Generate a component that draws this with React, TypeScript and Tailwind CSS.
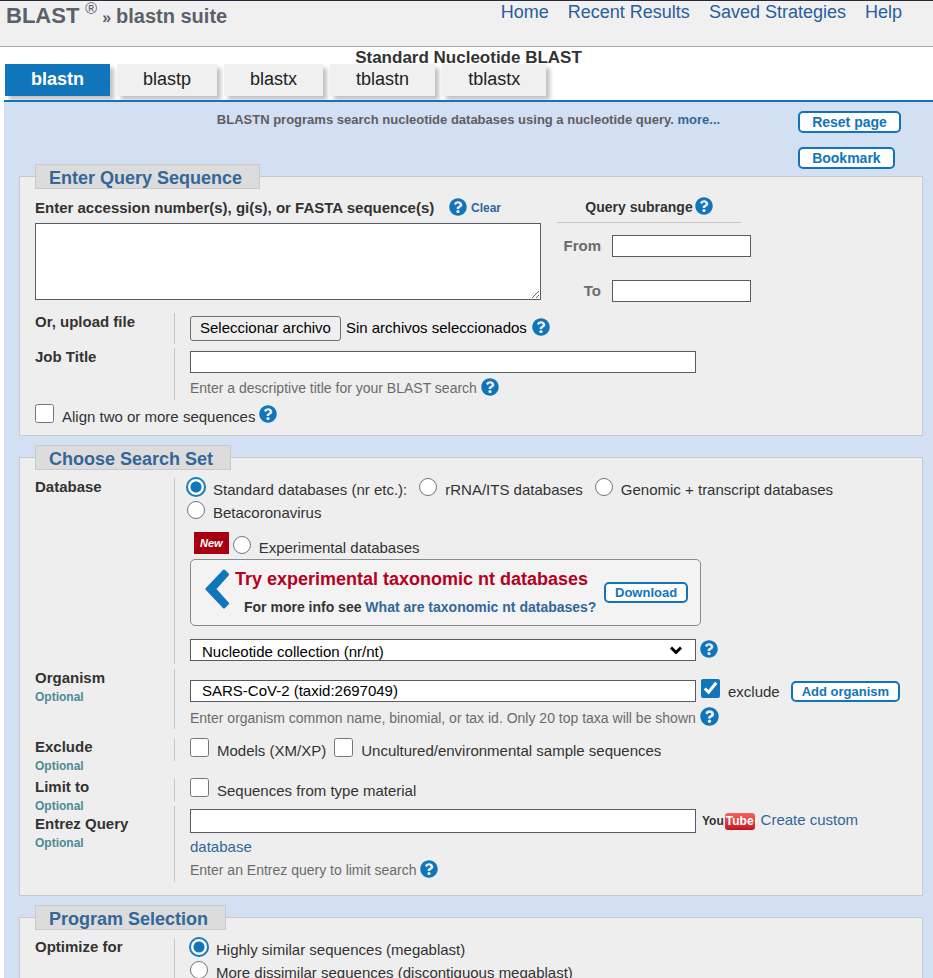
import type { ReactNode } from "react";
import { FaQuestionCircle } from "react-icons/fa";

function HelpButton({ topic, large = false }: { topic: string; large?: boolean }) {
  return (
    <button type="button" aria-label={`Help: ${topic}`} className="-mt-[3px] shrink-0 text-[#1175bb]">
      <FaQuestionCircle className={large ? "size-[19px]" : "size-[18px]"} />
    </button>
  );
}

function OutlineButton({ children, small = false }: { children: ReactNode; small?: boolean }) {
  return (
    <button
      type="button"
      className={`${
        small ? "h-[21px] px-[9px] text-[13px]" : "h-[22px] px-3 pb-px text-[14px]"
      } flex items-center rounded-[5px] border-2 border-[#1175bb] bg-white leading-none font-bold whitespace-nowrap text-[#1175bb]`}
    >
      {children}
    </button>
  );
}

function Panel({ title, className = "", children }: { title: string; className?: string; children: ReactNode }) {
  return (
    <fieldset className={`mr-[10px] ml-[15px] border border-[#c9c9c9] bg-[#eeeeee] px-[15px] ${className}`}>
      <legend className="h-[25px] border border-[#cacaca] bg-[#dcdcdc] pr-[17px] pl-[13px] text-[18px] leading-[27px] font-bold text-[#336699]">
        {title}
      </legend>
      {children}
    </fieldset>
  );
}

type RowProps = {
  label: string;
  htmlFor?: string;
  optional?: boolean;
  className?: string;
  labelClass?: string;
  contentClass?: string;
  children: ReactNode;
};

function Row({ label, htmlFor, optional, className = "", labelClass = "", contentClass = "", children }: RowProps) {
  return (
    <div className={`flex items-start ${className}`}>
      <div className={`w-[139px] shrink-0 ${labelClass}`}>
        <label htmlFor={htmlFor} className="block leading-[18px] font-bold">
          {label}
        </label>
        {optional && <span className="block text-[12px] leading-5 font-bold text-[#4f8a94]">Optional</span>}
      </div>
      <div className={`min-w-0 flex-1 border-l border-[#c6c6c6] pl-[15px] ${contentClass}`}>{children}</div>
    </div>
  );
}

function Check({ children, defaultChecked }: { children: ReactNode; defaultChecked?: boolean }) {
  return (
    <label className="flex items-start gap-2">
      <input type="checkbox" defaultChecked={defaultChecked} className="size-[19px] shrink-0 accent-[#1175bb]" />
      <span className="pt-1 leading-[18px] whitespace-nowrap">{children}</span>
    </label>
  );
}

function Radio({ name, children, defaultChecked }: { name: string; children: ReactNode; defaultChecked?: boolean }) {
  return (
    <label className="flex h-[23px] items-start gap-2">
      <input
        type="radio"
        name={name}
        defaultChecked={defaultChecked}
        className="size-[18px] shrink-0 appearance-none rounded-full border border-[#767676] bg-white checked:border-[#1175bb] checked:bg-[radial-gradient(circle,#1175bb_5px,#ffffff_6px)] checked:ring-1 checked:ring-[#1175bb]"
      />
      <span className="pt-[3px] leading-[18px] whitespace-nowrap">{children}</span>
    </label>
  );
}

const field = "block border border-[#565b66] bg-white text-black";
const hint = "flex h-5 items-center gap-1 text-[14px] text-[#6b6b6b]";
const link = "text-[#336699]";

const tabs = ["blastn", "blastp", "blastx", "tblastn", "tblastx"];
const menu = ["Home", "Recent Results", "Saved Strategies", "Help"];

export default function App() {
  return (
    <div className="flex h-screen flex-col overflow-hidden bg-white font-['Liberation_Sans',Arial,sans-serif] text-[15px] text-[#333333]">
      <header className="flex h-[47px] shrink-0 justify-between border-t border-b border-t-[#2b2a3a] border-b-[#aaaaaf] bg-[#f0f0f0] pr-[31px] pl-[6px]">
        <h1 className="flex items-start font-bold text-[#5b616b]">
          <a href="#blast" className="text-[22px] leading-[29px]">
            BLAST
          </a>
          <span className="ml-[6px] text-[16px] leading-4 font-normal">®</span>
          <span className="ml-[5px] text-[16px] leading-[33px]">»</span>
          <span className="ml-[5px] text-[20px] leading-[30px]">blastn suite</span>
        </h1>
        <nav className="flex gap-[19px] text-[18px] leading-[22px]">
          {menu.map((m) => (
            <a key={m} href="#menu" className="text-[#2a5d9c]">
              {m}
            </a>
          ))}
        </nav>
      </header>

      <h2 className="ml-1 h-[17px] shrink-0 text-center text-[17px] leading-[22px] font-bold">
        Standard Nucleotide BLAST
      </h2>

      <nav className="ml-[5px] flex h-9 shrink-0 items-start gap-[7px]">
        {tabs.map((t) => (
          <a
            key={t}
            href={`#${t}`}
            className={`h-8 px-[26px] text-[18px] leading-[30px] shadow-[4px_4px_4px_#c4c4c4] ${
              t === "blastn" ? "bg-[#1175bb] font-bold text-white" : "bg-[#f0f0f0] text-[#212121]"
            }`}
          >
            {t}
          </a>
        ))}
      </nav>

      <main className="relative ml-1 min-h-0 flex-1 border-t-2 border-[#1175bb] bg-[#d3dff3]">
        <div className="grid h-[62px] grid-cols-[1fr_auto_1fr]">
          <span />
          <p className="pt-2 text-[13px] leading-5 font-bold text-[#5e5e5e]">
            BLASTN programs search nucleotide databases using a nucleotide query.{" "}
            <a href="#more" className={link}>
              more...
            </a>
          </p>
          <div className="ml-[78px] flex flex-col items-start gap-[14px] pt-[9px]">
            <OutlineButton>Reset page</OutlineButton>
            <OutlineButton>Bookmark</OutlineButton>
          </div>
        </div>

        <Panel title="Enter Query Sequence" className="pb-[9px]">
          <div className="flex gap-4">
            <div>
              <div className="flex h-[34px] items-center gap-1 pt-1">
                <label htmlFor="seq" className="w-[410px] font-bold whitespace-nowrap">
                  Enter accession number(s), gi(s), or FASTA sequence(s)
                </label>
                <HelpButton topic="query sequence" />
                <a href="#clear" className={`text-[12px] font-bold ${link}`}>
                  Clear
                </a>
              </div>
              <textarea id="seq" className={`${field} h-[77px] w-[506px]`} />
            </div>
            <div>
              <div className="flex h-[34px] w-[184px] items-center justify-center gap-[2px] border-b border-[#c6c6c6] pt-1 text-[14px] font-bold">
                Query subrange
                <HelpButton topic="query subrange" />
              </div>
              <div className="flex flex-col gap-[23px] pt-3">
                <label className="flex h-[22px] items-center gap-[11px] font-bold text-[#6b6b6b]">
                  <span className="w-[44px] text-right">From</span>
                  <input type="text" className={`${field} h-[22px] w-[139px] font-normal`} />
                </label>
                <label className="flex h-[22px] items-center gap-[11px] font-bold text-[#6b6b6b]">
                  <span className="w-[44px] text-right">To</span>
                  <input type="text" className={`${field} h-[22px] w-[139px] font-normal`} />
                </label>
              </div>
            </div>
          </div>

          <Row
            label="Or, upload file"
            htmlFor="upload"
            className="mt-[11px]"
            contentClass="flex h-[31px] items-center gap-[5px]"
          >
            <input id="upload" type="file" className="sr-only" />
            <label
              htmlFor="upload"
              className="flex h-[25px] items-center rounded-[3px] border border-[#6f6f6f] bg-[#efefef] px-[9px] text-black"
            >
              Seleccionar archivo
            </label>
            <span className="text-black">Sin archivos seleccionados</span>
            <HelpButton topic="upload file" />
          </Row>

          <Row label="Job Title" htmlFor="job" className="mt-1" contentClass="pt-[3px] pb-[2px]">
            <input id="job" type="text" className={`${field} h-[22px] w-[506px] px-[11px]`} />
            <div className={`${hint} mt-[5px]`}>
              Enter a descriptive title for your BLAST search
              <HelpButton topic="job title" />
            </div>
          </Row>

          <div className="mt-1 flex items-center gap-1">
            <Check>Align two or more sequences</Check>
            <HelpButton topic="align sequences" />
          </div>
        </Panel>

        <Panel title="Choose Search Set" className="mt-[9px] pb-[13px]">
          <Row label="Database" htmlFor="db" className="mt-2" contentClass="pb-[3px]">
            <div className="-ml-[3px]">
              <div className="flex flex-wrap gap-x-3">
                <Radio name="db" defaultChecked>
                  Standard databases (nr etc.):
                </Radio>
                <Radio name="db">rRNA/ITS databases</Radio>
                <Radio name="db">Genomic + transcript databases</Radio>
                <Radio name="db">Betacoronavirus</Radio>
              </div>
              <div className="mt-2 flex items-start gap-1 pl-[7px]">
                <span className="h-[22px] bg-[#a60012] px-[6px] text-[11px] leading-[22px] font-bold text-white italic">
                  New
                </span>
                <div className="pt-1">
                  <Radio name="db">Experimental databases</Radio>
                </div>
              </div>
            </div>
            <div className="flex h-[67px] w-[511px] items-center rounded-[5px] border border-[#8a8a8a] bg-[#f3f3f3] pl-[14px]">
              <svg viewBox="0 0 24 40" className="-mt-2 h-10 w-6 shrink-0" aria-hidden="true">
                <path
                  d="M19 2 22.500 5.500 9.500 20 22.500 34.500 19 38 2 20Z"
                  fill="#1175bb"
                  stroke="#1175bb"
                  strokeWidth="3"
                  strokeLinejoin="round"
                />
              </svg>
              <div className="ml-[6px] w-[362px] pt-px font-bold">
                <p className="text-[18px] leading-[28px] whitespace-nowrap text-[#b5001f]">
                  Try experimental taxonomic nt databases
                </p>
                <p className="pl-[9px] text-[14px] leading-[28px] whitespace-nowrap">
                  For more info see{" "}
                  <a href="#taxonomic" className={link}>
                    What are taxonomic nt databases?
                  </a>
                </p>
              </div>
              <div className="ml-[7px]">
                <OutlineButton small>Download</OutlineButton>
              </div>
            </div>
            <div className="mt-[13px] flex items-center gap-1">
              <div className="relative">
                <select id="db" className={`${field} h-[22px] w-[506px] appearance-none px-[11px] pt-[2px] leading-5`}>
                  <option>Nucleotide collection (nr/nt)</option>
                </select>
                <svg
                  viewBox="0 0 12 8"
                  className="pointer-events-none absolute top-[7px] right-[14px] h-2 w-3"
                  aria-hidden="true"
                >
                  <path d="M1 1.500 6 6.500 11 1.500" fill="none" stroke="#000" strokeWidth="3" />
                </svg>
              </div>
              <HelpButton topic="database" />
            </div>
          </Row>

          <Row label="Organism" htmlFor="organism" optional className="mt-[5px]" contentClass="pt-[10px] pb-px">
            <div className="flex h-[23px] items-start gap-[5px]">
              <input
                id="organism"
                type="text"
                defaultValue="SARS-CoV-2 (taxid:2697049)"
                className={`${field} h-[22px] w-[506px] self-end px-[11px]`}
              />
              <Check defaultChecked>exclude</Check>
              <div className="ml-[6px] self-end">
                <OutlineButton small>Add organism</OutlineButton>
              </div>
            </div>
            <div className={`${hint} mt-[6px]`}>
              Enter organism common name, binomial, or tax id. Only 20 top taxa will be shown
              <HelpButton topic="organism" large />
            </div>
          </Row>

          <Row label="Exclude" optional className="mt-[9px] h-10" contentClass="flex h-[23px] gap-2">
            <Check>Models (XM/XP)</Check>
            <Check>Uncultured/environmental sample sequences</Check>
          </Row>

          <Row label="Limit to" optional className="h-7" contentClass="h-[23px]">
            <Check>Sequences from type material</Check>
          </Row>

          <Row label="Entrez Query" htmlFor="entrez" optional labelClass="pt-[9px]" contentClass="pb-[2px]">
            <div className="leading-[27px]">
              <input
                id="entrez"
                type="text"
                className="inline-block h-6 w-[506px] border border-[#565b66] bg-white px-[11px] align-middle text-black"
              />
              <a
                href="#youtube"
                className="mx-[6px] inline-flex items-center gap-px align-middle text-[12px] leading-[17px] font-bold text-[#333333]"
              >
                <span>You</span>
                <span className="rounded-[3px] bg-linear-to-b from-[#f4635f] to-[#c9061f] px-px text-white">Tube</span>
              </a>
              <a href="#custom" className={link}>
                Create custom database
              </a>
            </div>
            <div className={hint}>
              Enter an Entrez query to limit search
              <HelpButton topic="Entrez query" />
            </div>
          </Row>
        </Panel>

        <Panel title="Program Selection" className="mt-[9px]">
          <Row label="Optimize for" className="mt-2" contentClass="pb-6">
            <Radio name="program" defaultChecked>
              Highly similar sequences (megablast)
            </Radio>
            <Radio name="program">More dissimilar sequences (discontiguous megablast)</Radio>
          </Row>
        </Panel>
      </main>
    </div>
  );
}
